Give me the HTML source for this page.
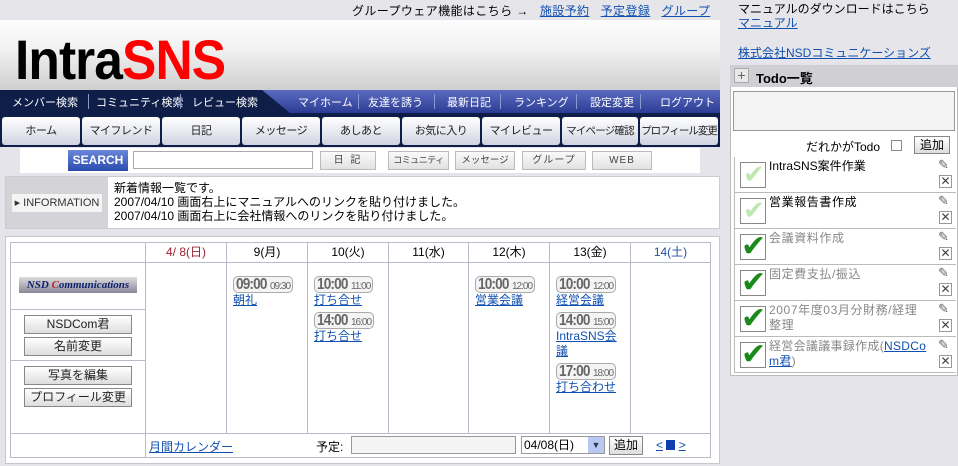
<!DOCTYPE html>
<html><head><meta charset="utf-8">
<style>
*{margin:0;padding:0;box-sizing:border-box}
body{width:958px;height:466px;overflow:hidden;background:#e4e4ea;font-family:"Liberation Sans","Noto Sans CJK JP",sans-serif;font-size:12px;color:#000;position:relative}
a{color:#1050b0;text-decoration:underline}
.abs{position:absolute}
#top{left:0;top:0;width:720px;height:20px;background:#e6e6ea}
#hdr{left:0;top:20px;width:720px;height:70px;background:linear-gradient(#fdfdfd,#f2f2f2 40%,#cfcfcf)}
#logo{left:15px;top:30px;font-weight:bold;font-size:56px;letter-spacing:-1px;line-height:60px;transform:scaleX(.92);transform-origin:left}
#nav1{left:0;top:90px;width:720px;height:23px;background:linear-gradient(#5b6cc0,#2c3c94)}
#nav1l{left:0;top:90px;width:290px;height:23px;background:#0e1e48;clip-path:polygon(0 0,262px 0,290px 23px,0 23px)}
.n1{position:absolute;top:94px;color:#fff;font-size:11px;white-space:nowrap}
.sep{position:absolute;top:94px;width:1px;height:15px;background:#8a9ad0}
#nav2{left:0;top:113px;width:720px;height:34px;background:#0e1e48}
.b2{position:absolute;top:117px;height:28px;width:78px;background:linear-gradient(#fff,#e4e6ee 60%,#cfd3e0);border-radius:3px;text-align:center;line-height:28px;font-size:11px;color:#222;white-space:nowrap;overflow:hidden;letter-spacing:-0.5px}
#srch{left:20px;top:148px;width:680px;height:25px;background:#fff}
.sb{position:absolute;top:151px;height:19px;border:1px solid #bbb;background:linear-gradient(#fafafa,#e2e2e2);font-size:10px;color:#444;text-align:center;line-height:17px;white-space:nowrap;overflow:hidden}
#info{left:5px;top:176px;width:715px;height:53px;background:#fff;border:1px solid #ccc}
#infol{left:6px;top:177px;width:102px;height:51px;background:#d4d4d8}
#cal{left:5px;top:236px;width:715px;height:228px;background:#fff;border:1px solid #c8c8cc}
table{border-collapse:collapse;position:absolute;left:10px;top:242px;width:701px}
td{border:1px solid #b8bcc8;text-align:center;vertical-align:top;font-size:12px}
.bt{display:block;margin:0 auto;width:108px;height:19px;border:1px solid #888;background:linear-gradient(#fff,#ddd);font-size:12px;line-height:17px;color:#222}
.tm{display:inline-block;border:1px solid #aaa;border-radius:5px;background:#f4f4f4;padding:0 2px;height:17px;line-height:15px;color:#666;white-space:nowrap}
.tm b{font-size:16px;letter-spacing:-1px;transform:scaleX(.85);transform-origin:left;display:inline-block;width:34px}
.tm s{text-decoration:none;font-size:10px;letter-spacing:-1px}
.ev{text-align:left;padding-left:6px}
.ev div{margin-top:4px}
.ev a{display:block;font-size:12px;line-height:15px}
#rtop{left:720px;top:0;width:238px;height:62px;background:#e6e6ea}
#todo{left:730px;top:65px;width:228px;height:311px;background:#fff;border:1px solid #bbb}
#todoh{left:730px;top:65px;width:228px;height:22px;background:#cfcfd4}
.item{position:absolute;left:734px;width:222px;height:36px;border-left:1px solid #bbb;border-bottom:1px solid #bbb}
.item .cb{position:absolute;left:5px;top:5px;width:26px;height:26px;border:1px solid #888;background:#fff;overflow:hidden}
.item .t{position:absolute;left:34px;top:2px;width:170px;font-size:12px;line-height:15px;letter-spacing:0.6px;white-space:nowrap}
.item .e{position:absolute;right:4px;top:1px;width:14px;height:14px;color:#666;font-size:13px;line-height:14px}
.item .x{position:absolute;right:4px;top:18px;width:13px;height:13px;border:1px solid #999;background:#fff;color:#444;font-size:12px;line-height:11px;text-align:center}
</style></head><body>
<div class="abs" id="top"></div>
<div class="abs" style="left:352px;top:2px;font-size:12px;white-space:nowrap;letter-spacing:0.4px">グループウェア機能はこちら → &nbsp; <a href="#">施設予約</a> &nbsp; <a href="#">予定登録</a> &nbsp; <a href="#">グループ</a></div>
<div class="abs" id="hdr"></div>
<div class="abs" id="logo"><span>Intra</span><span style="color:#f00">SNS</span></div>

<div class="abs" id="nav1"></div>
<div class="abs" id="nav1l"></div>
<span class="n1" style="left:12px">メンバー検索</span><div class="sep" style="left:88px"></div>
<span class="n1" style="left:96px">コミュニティ検索</span><div class="sep" style="left:180px"></div>
<span class="n1" style="left:192px">レビュー検索</span>
<span class="n1" style="left:298px">マイホーム</span><div class="sep" style="left:358px"></div>
<span class="n1" style="left:368px">友達を誘う</span><div class="sep" style="left:434px"></div>
<span class="n1" style="left:447px">最新日記</span><div class="sep" style="left:500px"></div>
<span class="n1" style="left:514px">ランキング</span><div class="sep" style="left:576px"></div>
<span class="n1" style="left:590px">設定変更</span><div class="sep" style="left:640px"></div>
<span class="n1" style="left:660px">ログアウト</span>

<div class="abs" id="nav2"></div>
<div class="b2" style="left:2px">ホーム</div>
<div class="b2" style="left:82px">マイフレンド</div>
<div class="b2" style="left:162px">日記</div>
<div class="b2" style="left:242px">メッセージ</div>
<div class="b2" style="left:322px">あしあと</div>
<div class="b2" style="left:402px">お気に入り</div>
<div class="b2" style="left:482px">マイレビュー</div>
<div class="b2" style="left:562px;width:76px;font-size:10.5px;letter-spacing:-0.8px">マイページ確認</div>
<div class="b2" style="left:640px;font-size:10.5px;letter-spacing:-1px">プロフィール変更</div>

<div class="abs" id="srch"></div>
<div class="abs" style="left:68px;top:150px;width:60px;height:21px;background:linear-gradient(#6a86d8,#2a4cb0);color:#fff;font-size:12px;font-weight:bold;text-align:center;line-height:21px">SEARCH</div>
<div class="abs" style="left:133px;top:151px;width:180px;height:18px;border:1px solid #aaa;background:#fff"></div>
<div class="sb" style="left:320px;width:56px;letter-spacing:2px">日 記</div>
<div class="sb" style="left:388px;width:61px;font-size:9px;letter-spacing:-0.5px">コミュニティ</div>
<div class="sb" style="left:455px;width:60px;font-size:9.5px">メッセージ</div>
<div class="sb" style="left:522px;width:64px;letter-spacing:1px">グループ</div>
<div class="sb" style="left:592px;width:60px;letter-spacing:1px">WEB</div>

<div class="abs" id="info"></div>
<div class="abs" id="infol"></div>
<div class="abs" style="left:12px;top:194px;width:90px;height:18px;background:#f4f4f4;font-size:11px;color:#333;line-height:18px;text-align:center">▸ INFORMATION</div>
<div class="abs" style="left:114px;top:181px;font-size:12px;line-height:14px;white-space:nowrap">新着情報一覧です。<br>2007/04/10 画面右上にマニュアルへのリンクを貼り付けました。<br>2007/04/10 画面右上に会社情報へのリンクを貼り付けました。</div>

<div class="abs" id="cal"></div>
<table>
<tr style="height:20px;line-height:18px"><td style="width:135px"></td><td style="width:81px;color:#a02030">4/ 8(日)</td><td style="width:81px">9(月)</td><td style="width:81px">10(火)</td><td style="width:80px">11(水)</td><td style="width:81px">12(木)</td><td style="width:81px">13(金)</td><td style="color:#2050a0">14(土)</td></tr>
<tr style="height:171px">
<td style="padding:0">
 <div style="height:47px;border-bottom:1px solid #b8bcc8;padding-top:14px"><div style="margin:0 auto;width:118px;height:16px;background:linear-gradient(#ddd,#889);font-family:'Liberation Serif',serif;font-style:italic;font-weight:bold;font-size:11px;color:#102070;line-height:16px">NSD <span style="color:#c02020">C</span>ommunications</div></div>
 <div style="height:51px;border-bottom:1px solid #b8bcc8;padding-top:5px"><div class="bt">NSDCom君</div><div class="bt" style="margin-top:3px">名前変更</div></div>
 <div style="padding-top:5px"><div class="bt">写真を編集</div><div class="bt" style="margin-top:3px">プロフィール変更</div></div>
</td>
<td></td>
<td class="ev"><div style="margin-top:13px"><span class="tm"><b>09:00</b><s>09:30</s></span><a href="#">朝礼</a></div></td>
<td class="ev"><div style="margin-top:13px"><span class="tm"><b>10:00</b><s>11:00</s></span><a href="#">打ち合せ</a></div><div><span class="tm"><b>14:00</b><s>16:00</s></span><a href="#">打ち合せ</a></div></td>
<td></td>
<td class="ev"><div style="margin-top:13px"><span class="tm"><b>10:00</b><s>12:00</s></span><a href="#">営業会議</a></div></td>
<td class="ev"><div style="margin-top:13px"><span class="tm"><b>10:00</b><s>12:00</s></span><a href="#">経営会議</a></div><div><span class="tm"><b>14:00</b><s>15:00</s></span><a href="#">IntraSNS会<br>議</a></div><div><span class="tm"><b>17:00</b><s>18:00</s></span><a href="#">打ち合わせ</a></div></td>
<td></td>
</tr>
<tr style="height:24px"><td></td><td colspan="7" style="text-align:left;position:relative">
<a href="#" style="position:absolute;left:3px;top:4px">月間カレンダー</a>
<span style="position:absolute;left:170px;top:4px">予定:</span>
<span style="position:absolute;left:205px;top:2px;width:165px;height:18px;border:1px solid #999;background:#f4f4f4"></span>
<span style="position:absolute;left:375px;top:2px;width:84px;height:18px;border:1px solid #999;background:#fff;font-size:12px;line-height:16px;padding-left:2px">04/08(日)<span style="position:absolute;right:0;top:0;width:16px;height:16px;background:#b8c8f0;color:#335;font-size:9px;text-align:center">▼</span></span>
<span style="position:absolute;left:463px;top:2px;width:34px;height:19px;border:1px solid #888;background:linear-gradient(#fff,#ddd);text-align:center;line-height:17px">追加</span>
<span style="position:absolute;left:510px;top:4px;color:#1050b0"><u>&lt;</u> <span style="display:inline-block;width:9px;height:10px;background:#1040b0;vertical-align:-1px"></span> <u>&gt;</u></span>
</td></tr>
</table>

<div class="abs" id="rtop"></div>
<div class="abs" style="left:738px;top:2px;font-size:12px;line-height:14px">マニュアルのダウンロードはこちら<br><a href="#">マニュアル</a></div>
<div class="abs" style="left:738px;top:44px;font-size:12px"><a href="#">株式会社NSDコミュニケーションズ</a></div>
<div class="abs" id="todo"></div>
<div class="abs" id="todoh"></div>
<div class="abs" style="left:734px;top:68px;width:15px;height:15px;background:#e8e8e8;border:1px solid #aaa;color:#666;font-size:14px;line-height:13px;text-align:center">+</div>
<div class="abs" style="left:756px;top:68px;font-weight:bold;font-size:13px">Todo一覧</div>
<div class="abs" style="left:733px;top:91px;width:222px;height:40px;border:1px solid #999;background:#f4f4f4"></div>
<div class="abs" style="left:806px;top:138px;font-size:12px">だれかがTodo</div>
<div class="abs" style="left:891px;top:140px;width:11px;height:11px;border:1px solid #888;background:#fff"></div>
<div class="abs" style="left:914px;top:136px;width:36px;height:18px;border:1px solid #888;background:linear-gradient(#fff,#ddd);text-align:center;line-height:16px">追加</div>

<div class="item" style="top:157px"><div class="cb"><span style="position:absolute;left:2px;top:-4px;color:#bfe8b0;font-size:26px">✔</span></div><div class="t" style="letter-spacing:0">IntraSNS案件作業</div><div class="e">✎</div><div class="x">✕</div></div>
<div class="item" style="top:193px"><div class="cb"><span style="position:absolute;left:2px;top:-4px;color:#bfe8b0;font-size:26px">✔</span></div><div class="t">営業報告書作成</div><div class="e">✎</div><div class="x">✕</div></div>
<div class="item" style="top:229px"><div class="cb"><span style="position:absolute;left:0;top:-6px;color:#1a8a1a;font-size:30px">✔</span></div><div class="t" style="color:#888">会議資料作成</div><div class="e">✎</div><div class="x">✕</div></div>
<div class="item" style="top:265px"><div class="cb"><span style="position:absolute;left:0;top:-6px;color:#1a8a1a;font-size:30px">✔</span></div><div class="t" style="color:#888">固定費支払/振込</div><div class="e">✎</div><div class="x">✕</div></div>
<div class="item" style="top:301px"><div class="cb"><span style="position:absolute;left:0;top:-6px;color:#1a8a1a;font-size:30px">✔</span></div><div class="t" style="color:#888">2007年度03月分財務/経理<br>整理</div><div class="e">✎</div><div class="x">✕</div></div>
<div class="item" style="top:337px"><div class="cb"><span style="position:absolute;left:0;top:-6px;color:#1a8a1a;font-size:30px">✔</span></div><div class="t" style="color:#888;letter-spacing:0.3px">経営会議議事録作成(<a href="#">NSDCo</a><br><a href="#">m君</a>)</div><div class="e">✎</div><div class="x">✕</div></div>
</body></html>
